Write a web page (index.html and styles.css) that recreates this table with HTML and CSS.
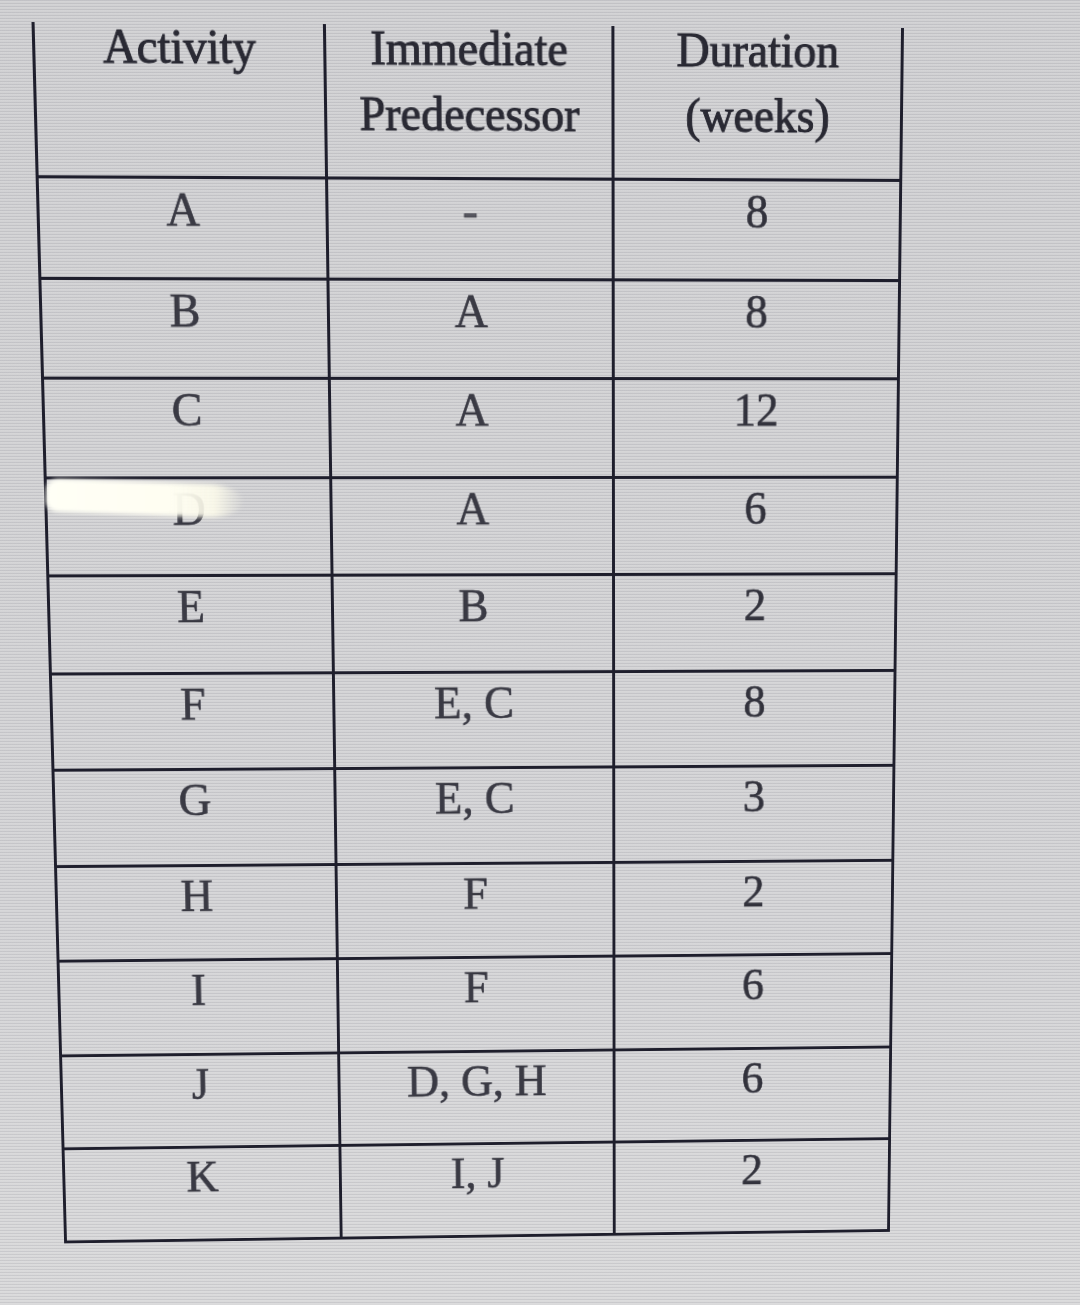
FILE: index.html
```html
<!DOCTYPE html>
<html lang="en">
<head>
<meta charset="utf-8">
<title>Activity table</title>
<link rel="stylesheet" href="styles.css">
</head>
<body>
<div class="screen">
  <div class="sheet">
    <div class="row head">
      <div class="cell"><div class="hd">Activity</div></div>
      <div class="cell"><div class="hd">Immediate<br>Predecessor</div></div>
      <div class="cell"><div class="hd">Duration<br>(weeks)</div></div>
    </div>
    <div class="row"><div class="cell">A</div><div class="cell dash">-</div><div class="cell num">8</div></div>
    <div class="row"><div class="cell">B</div><div class="cell">A</div><div class="cell num">8</div></div>
    <div class="row"><div class="cell">C</div><div class="cell">A</div><div class="cell num">12</div></div>
    <div class="row"><div class="cell">D</div><div class="cell">A</div><div class="cell num">6</div></div>
    <div class="row"><div class="cell">E</div><div class="cell">B</div><div class="cell num">2</div></div>
    <div class="row"><div class="cell">F</div><div class="cell">E, C</div><div class="cell num">8</div></div>
    <div class="row"><div class="cell">G</div><div class="cell">E, C</div><div class="cell num">3</div></div>
    <div class="row"><div class="cell">H</div><div class="cell">F</div><div class="cell num">2</div></div>
    <div class="row"><div class="cell">I</div><div class="cell">F</div><div class="cell num">6</div></div>
    <div class="row"><div class="cell">J</div><div class="cell">D, G, H</div><div class="cell num">6</div></div>
    <div class="row"><div class="cell">K</div><div class="cell">I, J</div><div class="cell num">2</div></div>
  </div>
  <div class="glare"></div>
</div>
</body>
</html>
```
FILE: styles.css
```css
html, body {
  margin: 0;
  padding: 0;
}
body {
  width: 1080px;
  height: 1305px;
  overflow: hidden;
  background-color: #d3d3d5;
  background-image:
    repeating-linear-gradient(to bottom, rgba(40, 40, 60, 0.09) 0 1px, rgba(255, 255, 255, 0.06) 1px 2px, transparent 2px 3px),
    linear-gradient(to bottom, #d1d1d3 0%, #d5d5d7 70%, #dadadb 100%);
  font-family: "Liberation Serif", "Times New Roman", serif;
}
.screen {
  position: relative;
  width: 1080px;
  height: 1305px;
}
.sheet {
  width: 868px;
  transform-origin: 0 0;
  transform: matrix3d(1.020960, 0.0074253, 0, 0.0000174590,
                      0.029687, 1.057348, 0, 0.0000465230,
                      0, 0, 1, 0,
                      31.5, 22, 0, 1);
  color: #3a3a44;
  font-size: 46px;
  -webkit-text-stroke: 0.6px #33333d;
  filter: blur(0.5px);
}
.row {
  display: grid;
  grid-template-columns: 287px 287px 294px;
  height: 97.5px;
  box-sizing: border-box;
  border-bottom: 3px solid #1e1e2c;
}
.row.head {
  height: 149px;
  color: #2a2a34;
  -webkit-text-stroke: 0.9px #24242e;
}
.cell {
  box-sizing: border-box;
  border-left: 3px solid #1e1e2c;
  text-align: center;
  line-height: 60px;
}
.cell:last-child {
  border-right: 3px solid #1e1e2c;
}
.hd {
  line-height: 63px;
  margin-top: -9px;
}
.num {
  color: #32323c;
}
.dash {
  color: #55555e;
}
.glare {
  position: absolute;
  left: 46px;
  top: 482px;
  width: 198px;
  height: 33px;
  border-radius: 14px 40px 40px 14px / 12px 18px 18px 12px;
  background: linear-gradient(to right, #fffff6 0%, #fffef2 60%, rgba(255, 253, 236, 0.85) 85%, rgba(255, 253, 236, 0) 100%);
  transform: rotate(2deg);
  filter: blur(2px);
}
```
